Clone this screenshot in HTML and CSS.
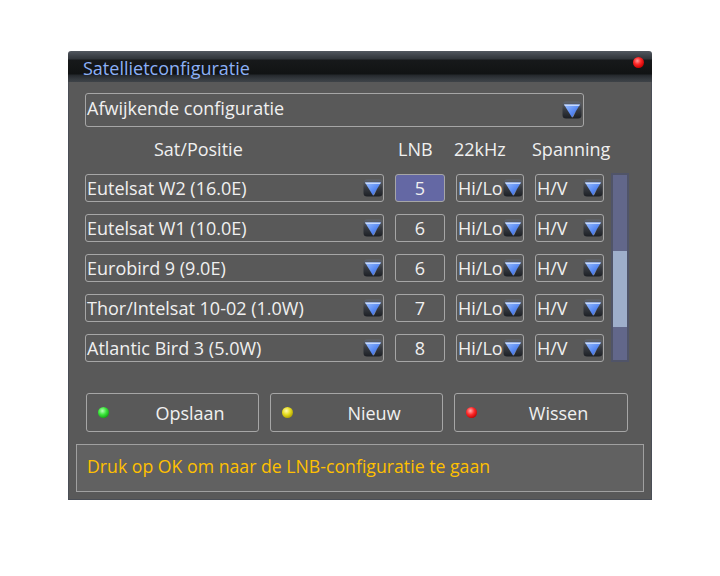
FILE: index.html
```html
<!DOCTYPE html>
<html>
<head>
<meta charset="utf-8">
<link rel="stylesheet" href="styles.css">
</head>
<body>
<svg class="defs" width="0" height="0">
  <defs>
    <linearGradient id="gBox" x1="0" y1="0" x2="0" y2="1">
      <stop offset="0" stop-color="#626770"/>
      <stop offset="0.45" stop-color="#3a3e45"/>
      <stop offset="1" stop-color="#1c1f24"/>
    </linearGradient>
    <linearGradient id="gTri" x1="0" y1="0" x2="1" y2="1">
      <stop offset="0" stop-color="#9cc0ff"/>
      <stop offset="0.5" stop-color="#5f8ff5"/>
      <stop offset="1" stop-color="#2f5fd8"/>
    </linearGradient>
    <symbol id="arrow" viewBox="0 0 20 18">
      <rect x="0.5" y="0.5" width="19" height="17" rx="3.5" fill="url(#gBox)"/>
      <path d="M2 3.5 H18 L10 16.5 Z" fill="url(#gTri)"/>
      <path d="M2 3.5 H18 L17 5 H3 Z" fill="#c4d8ff"/>
      <path d="M10 16.5 L14 10 L11 16 Z" fill="#e8f0ff" opacity="0.8"/>
    </symbol>
  </defs>
</svg>

<div class="window">
  <div class="titlebar">
    <span class="title">Satellietconfiguratie</span>
    <span class="led"></span>
  </div>
  <div class="panel">
    <div class="dropdown">
      <span class="dd-text">Afwijkende configuratie</span>
      <svg class="arr arr-dd"><use href="#arrow"/></svg>
    </div>

    <div class="heads">
      <span class="h-sat">Sat/Positie</span>
      <span class="h-lnb">LNB</span>
      <span class="h-khz">22kHz</span>
      <span class="h-span">Spanning</span>
    </div>

    <div class="list">
      <div class="rows">
        <div class="box sat"><span>Eutelsat W2 (16.0E)</span><svg class="arr"><use href="#arrow"/></svg></div>
        <div class="box lnb sel">5</div>
        <div class="box opt"><span>Hi/Lo</span><svg class="arr"><use href="#arrow"/></svg></div>
        <div class="box opt"><span>H/V</span><svg class="arr"><use href="#arrow"/></svg></div>

        <div class="box sat"><span>Eutelsat W1 (10.0E)</span><svg class="arr"><use href="#arrow"/></svg></div>
        <div class="box lnb">6</div>
        <div class="box opt"><span>Hi/Lo</span><svg class="arr"><use href="#arrow"/></svg></div>
        <div class="box opt"><span>H/V</span><svg class="arr"><use href="#arrow"/></svg></div>

        <div class="box sat"><span>Eurobird 9 (9.0E)</span><svg class="arr"><use href="#arrow"/></svg></div>
        <div class="box lnb">6</div>
        <div class="box opt"><span>Hi/Lo</span><svg class="arr"><use href="#arrow"/></svg></div>
        <div class="box opt"><span>H/V</span><svg class="arr"><use href="#arrow"/></svg></div>

        <div class="box sat"><span>Thor/Intelsat 10-02 (1.0W)</span><svg class="arr"><use href="#arrow"/></svg></div>
        <div class="box lnb">7</div>
        <div class="box opt"><span>Hi/Lo</span><svg class="arr"><use href="#arrow"/></svg></div>
        <div class="box opt"><span>H/V</span><svg class="arr"><use href="#arrow"/></svg></div>

        <div class="box sat"><span>Atlantic Bird 3 (5.0W)</span><svg class="arr"><use href="#arrow"/></svg></div>
        <div class="box lnb">8</div>
        <div class="box opt"><span>Hi/Lo</span><svg class="arr"><use href="#arrow"/></svg></div>
        <div class="box opt"><span>H/V</span><svg class="arr"><use href="#arrow"/></svg></div>
      </div>
      <div class="scrollbar"><div class="thumb"></div></div>
    </div>

    <div class="buttons">
      <div class="btn"><span class="dot green"></span><span class="label">Opslaan</span></div>
      <div class="btn"><span class="dot yellow"></span><span class="label">Nieuw</span></div>
      <div class="btn"><span class="dot red"></span><span class="label">Wissen</span></div>
    </div>

    <div class="status">Druk op OK om naar de LNB-configuratie te gaan</div>
  </div>
</div>
</body>
</html>
```

FILE: styles.css
```css
* { box-sizing: border-box; }

html, body {
  margin: 0;
  padding: 0;
  background: #ffffff;
}

body {
  font-family: "Open Sans", "DejaVu Sans", sans-serif;
  font-size: 18px;
  color: #f0f0f0;
}

.defs {
  display: block;
  width: 0;
  height: 0;
  overflow: hidden;
}

.window {
  margin: 51px 0 0 68px;
  width: 584px;
  height: 449px;
  display: flex;
  flex-direction: column;
}

.titlebar {
  height: 31px;
  flex: none;
  display: flex;
  align-items: center;
  justify-content: space-between;
  padding: 0 8px 0 15px;
  border-radius: 3px 3px 0 0;
  background: linear-gradient(to bottom,
    #525860 0px, #3c4147 5px, #30353a 8px,
    #17191b 9px, #111314 23px,
    #24282c 24px, #353a3f 28px, #3e4348 31px);
}

.title {
  color: #8cb0f6;
  font-size: 18px;
  line-height: 22px;
  margin-top: 2px;
}

.led {
  align-self: flex-start;
  margin-top: 6px;
  width: 11px;
  height: 11px;
  border-radius: 50%;
  background: radial-gradient(circle at 40% 35%, #ff9a9a 0, #ff2a2a 35%, #c80000 75%, #6e0000 100%);
}

.panel {
  flex: 1;
  display: flex;
  flex-direction: column;
  background: #595959;
  border: 1px solid #4a4e56;
  border-top: 0;
  padding: 11px 0 7px 16px;
}

.dropdown {
  width: 499px;
  height: 34px;
  border: 1px solid #a6a6a6;
  border-radius: 3px;
  display: flex;
  align-items: center;
  justify-content: space-between;
  padding: 0 1px 0 1px;
}

.dd-text {
  line-height: 26px;
  padding-bottom: 4px;
}

.arr {
  width: 20px;
  height: 18px;
  flex: none;
}

.heads {
  margin-top: 9px;
  height: 26px;
  line-height: 26px;
  display: grid;
  grid-template-columns: 299px 50px 68px 69px;
  column-gap: 11px;
  white-space: nowrap;
}

.h-sat { padding-left: 69px; }
.h-lnb { padding-left: 3px; }
.h-khz { margin-left: -2px; }
.h-span { margin-left: -3px; }

.list {
  margin-top: 12px;
  display: flex;
  gap: 7px;
}

.rows {
  display: grid;
  grid-template-columns: 299px 50px 68px 69px;
  grid-auto-rows: 28px;
  column-gap: 11px;
  row-gap: 12px;
}

.box {
  border: 1px solid #a6a6a6;
  border-radius: 3px;
  display: flex;
  align-items: center;
  justify-content: space-between;
  padding: 0 0 0 1px;
  line-height: 26px;
  white-space: nowrap;
}

.lnb {
  justify-content: center;
  padding: 0;
}

.sel {
  background: #6468a4;
}

.scrollbar {
  width: 18px;
  height: 189px;
  margin-top: -1px;
  border: 2px solid #505468;
  background: #62678a;
  display: flex;
  flex-direction: column;
}

.thumb {
  margin-top: 76px;
  height: 76px;
  background: #9eaecb;
}

.buttons {
  margin-top: 31px;
  margin-left: 1px;
  display: grid;
  grid-template-columns: 173px 173px 174px;
  column-gap: 11px;
}

.btn {
  height: 39px;
  border: 1px solid #a6a6a6;
  border-radius: 3px;
  display: flex;
  align-items: center;
  padding-left: 11px;
}

.dot {
  width: 11px;
  height: 11px;
  border-radius: 50%;
  flex: none;
}

.green { background: radial-gradient(circle at 40% 35%, #b6ffb6 0, #3be63b 40%, #119a11 80%, #0a4a0a 100%); }
.yellow { background: radial-gradient(circle at 40% 35%, #fffab0 0, #e6dc1e 40%, #a89a00 80%, #4a4400 100%); }
.red { background: radial-gradient(circle at 40% 35%, #ffb0b0 0, #ff2a2a 40%, #b80000 80%, #4a0000 100%); }

.label {
  flex: 1;
  text-align: center;
  margin-left: 13px;
  line-height: 26px;
}

.status {
  margin-top: 12px;
  margin-left: -9px;
  width: 568px;
  height: 48px;
  background: #616161;
  border: 1px solid #a0a0a0;
  color: #ffc000;
  font-size: 17.7px;
  line-height: 42px;
  padding-left: 10px;
  white-space: nowrap;
}
```
